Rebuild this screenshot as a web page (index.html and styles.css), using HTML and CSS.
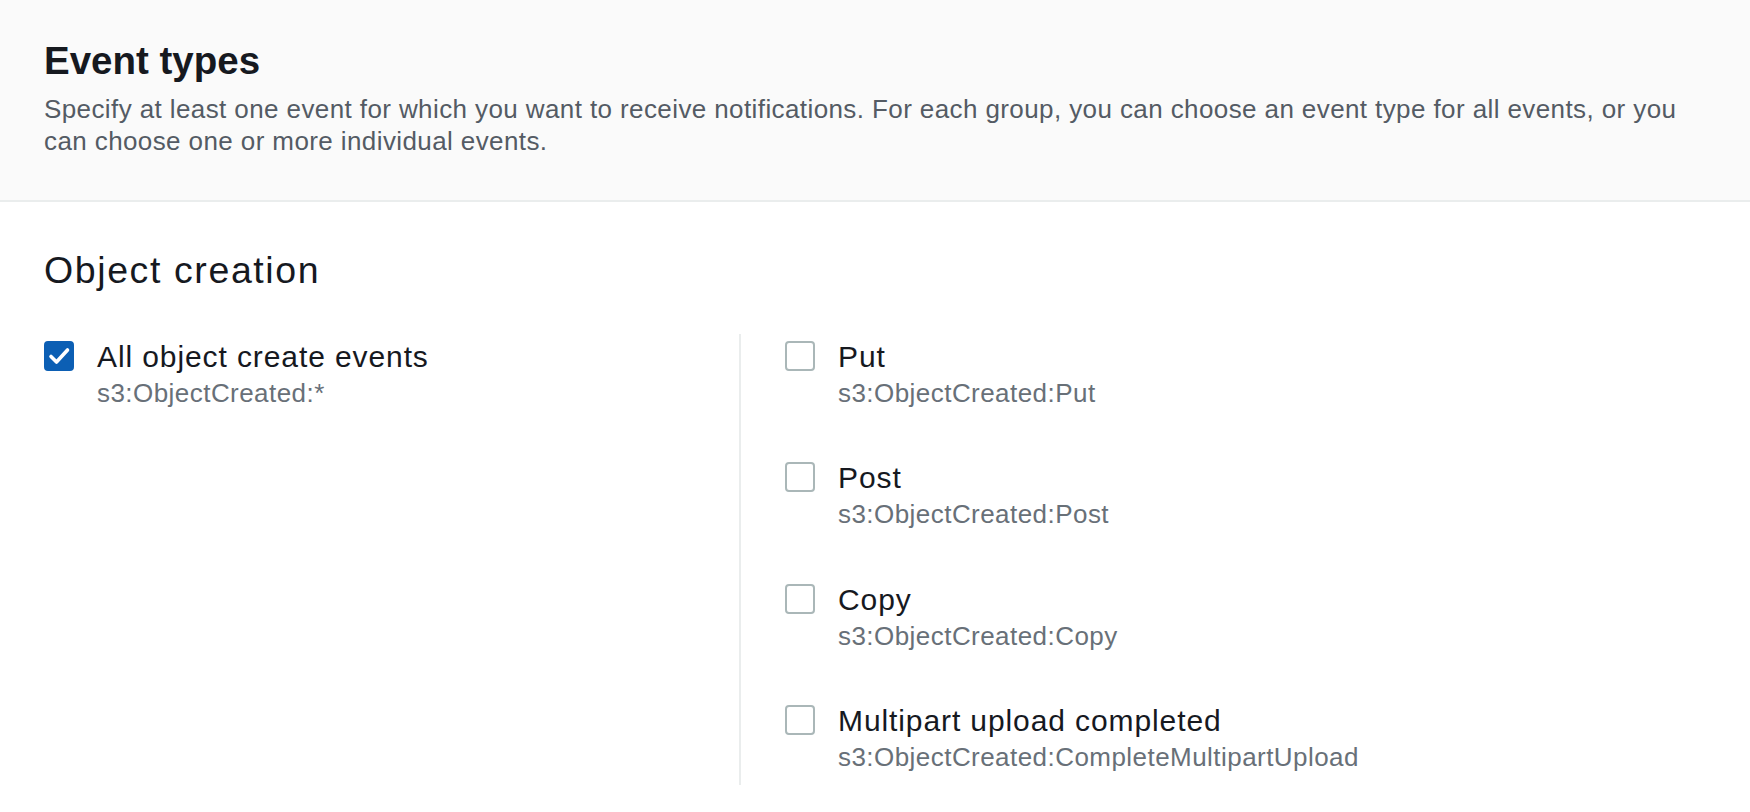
FILE: index.html
```html
<!DOCTYPE html>
<html lang="en">
<head>
<meta charset="utf-8">
<title>Event types</title>
<link rel="stylesheet" href="styles.css">
</head>
<body>
<div class="panel">
  <header class="panel-header">
    <h2 class="title">Event types</h2>
    <p class="desc">Specify at least one event for which you want to receive notifications. For each group, you can choose an event type for all events, or you can choose one or more individual events.</p>
  </header>
  <section class="group">
    <h3 class="group-title">Object creation</h3>
    <div class="cols">
      <div class="col col-left">
        <div class="option">
          <span class="box checked">
            <svg width="30" height="30" viewBox="0 0 30 30"><polyline points="7,15.5 12.5,21 23.5,9" fill="none" stroke="#fff" stroke-width="3.6" stroke-linecap="round" stroke-linejoin="round"/></svg>
          </span>
          <span class="text"><span class="label">All object create events</span><span class="sub">s3:ObjectCreated:*</span></span>
        </div>
      </div>
      <div class="col col-right">
        <div class="option">
          <span class="box"></span>
          <span class="text"><span class="label">Put</span><span class="sub">s3:ObjectCreated:Put</span></span>
        </div>
        <div class="option">
          <span class="box"></span>
          <span class="text"><span class="label">Post</span><span class="sub">s3:ObjectCreated:Post</span></span>
        </div>
        <div class="option">
          <span class="box"></span>
          <span class="text"><span class="label">Copy</span><span class="sub">s3:ObjectCreated:Copy</span></span>
        </div>
        <div class="option">
          <span class="box"></span>
          <span class="text"><span class="label">Multipart upload completed</span><span class="sub">s3:ObjectCreated:CompleteMultipartUpload</span></span>
        </div>
      </div>
    </div>
  </section>
</div>
</body>
</html>
```
FILE: styles.css
```css
html, body {
  margin: 0;
  padding: 0;
  background: #ffffff;
}
body {
  font-family: "Liberation Sans", Arial, sans-serif;
  color: #16191f;
}
.panel-header {
  background: #fafafa;
  border-bottom: 2px solid #eaeded;
  padding: 38.6px 44px 43.4px;
}
.title {
  margin: 0;
  font-size: 38.5px;
  line-height: 44px;
  font-weight: 700;
  color: #16191f;
}
.desc {
  margin: 10px 0 0;
  font-size: 26px;
  line-height: 32px;
  letter-spacing: 0.4px;
  color: #545b64;
}
.group {
  padding: 46px 44px 0;
}
.group-title {
  margin: 0;
  font-size: 37.5px;
  line-height: 44px;
  font-weight: 400;
  letter-spacing: 1.6px;
  color: #16191f;
}
.cols {
  display: grid;
  grid-template-columns: 695px 1fr;
  margin-top: 42px;
}
.col {
  display: flex;
  flex-direction: column;
  gap: 49.5px;
  padding-top: 2.6px;
}
.col-right {
  border-left: 2px solid #eaeded;
  padding-left: 44px;
  padding-bottom: 12px;
}
.option {
  display: flex;
  align-items: flex-start;
  gap: 23px;
}
.box {
  flex: none;
  box-sizing: border-box;
  width: 30px;
  height: 30px;
  margin-top: 4.4px;
  border: 2px solid #aab7b8;
  border-radius: 4px;
  background: #ffffff;
  position: relative;
}
.box.checked {
  background: #0c5fb4;
  border-color: #0c5fb4;
}
.box svg {
  position: absolute;
  left: -2px;
  top: -2px;
}
.text {
  display: flex;
  flex-direction: column;
}
.label {
  font-size: 30px;
  line-height: 40px;
  letter-spacing: 0.9px;
  color: #16191f;
}
.sub {
  font-size: 26px;
  line-height: 32px;
  letter-spacing: 0.45px;
  color: #687078;
}
```
